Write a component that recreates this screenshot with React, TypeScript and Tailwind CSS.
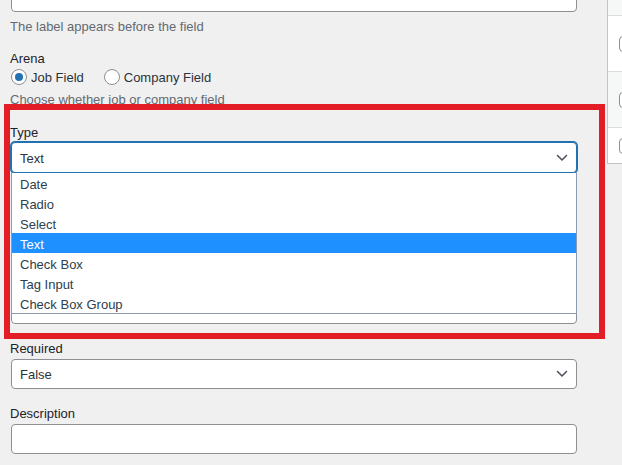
import React from "react";

const Chevron = () => (
  <svg width="12" height="8" viewBox="0 0 12 8" className="absolute right-[8px] top-1/2 -translate-y-1/2">
    <polyline points="1.5,1.5 6,6 10.5,1.5" fill="none" stroke="#50575e" strokeWidth="1.6" strokeLinecap="round" strokeLinejoin="round" />
  </svg>
);

const Radio = ({ checked }: { checked?: boolean }) => (
  <span className="w-[16px] h-[16px] rounded-full border border-[#8c8f94] bg-white flex items-center justify-center shrink-0">
    {checked && <span className="w-[8px] h-[8px] rounded-full bg-[#2271b1]" />}
  </span>
);

const items = ["Date", "Radio", "Select", "Text", "Check Box", "Tag Input", "Check Box Group"];

export default function App() {
  return (
    <div
      className="relative w-[622px] h-[465px] overflow-hidden bg-[#f0f0f1] flex text-[13px]"
      style={{ fontFamily: '"Liberation Sans", Arial, sans-serif' }}
    >
      {/* main column */}
      <div className="w-[607px] shrink-0 pl-[11px] flex flex-col">
        <div className="w-[566px] h-[30px] mt-[-18px] bg-white border border-[#8c8f94] rounded-[4px] shrink-0" />
        <div className="mt-[4px] h-[18px] leading-[22px] text-[#646970] -ml-[1px]">The label appears before the field</div>

        <div className="mt-[15px] h-[18px] leading-[20px] text-[#1d2327] -ml-[1px]">Arena</div>
        <div className="mt-[1px] h-[18px] flex items-center text-[#2c3338]">
          <Radio checked />
          <span className="ml-[4px] pt-[2px]">Job Field</span>
          <span className="ml-[20px] flex items-center">
            <Radio />
            <span className="ml-[4px] pt-[2px]">Company Field</span>
          </span>
        </div>
        <div className="mt-[4px] h-[18px] leading-[20px] text-[#646970] -ml-[1px]">Choose whether job or company field</div>

        <div className="mt-[15px] h-[18px] leading-[20px] text-[#1d2327] -ml-[1px]">Type</div>
        <div className="relative mt-[1px] w-[566px]">
          <div className="relative h-[31px] bg-white border border-[#2271b1] shadow-[0_0_0_1px_#2271b1] rounded-[4px] flex items-center pl-[8px] text-[#2c3338]">
            <span className="pt-[2px]">Text</span>
            <Chevron />
          </div>
          {/* hidden field beneath the open list */}
          <div className="mt-[121px] h-[30px] bg-white border border-[#8c8f94] rounded-[4px]" />
          {/* open dropdown list */}
          <div className="absolute left-0 top-[31px] w-[566px] bg-white border border-t-0 border-[#8a9bb2] flex flex-col">
            {items.map((it) => (
              <div
                key={it}
                className={
                  "h-[20px] leading-[23px] pl-[8px] " +
                  (it === "Text" ? "bg-[#1e90ff] text-white" : "text-[#2c3e50]")
                }
              >
                {it}
              </div>
            ))}
          </div>
        </div>

        <div className="mt-[15px] h-[18px] leading-[20px] text-[#1d2327] -ml-[1px]">Required</div>
        <div className="relative mt-[2px] w-[566px] h-[30px] bg-white border border-[#8c8f94] rounded-[4px] flex items-center pl-[8px] text-[#2c3338]">
          <span className="pt-[2px]">False</span>
          <Chevron />
        </div>

        <div className="mt-[15px] h-[18px] leading-[20px] text-[#1d2327] -ml-[1px]">Description</div>
        <div className="mt-[2px] w-[566px] h-[30px] bg-white border border-[#8c8f94] rounded-[4px]" />
      </div>

      {/* right table sliver */}
      <div className="flex-1">
        <div className="border-l border-b border-[#c3c4c7] flex flex-col">
          <div className="h-[16px] bg-[#f6f7f7] border-b border-[#dcdcde]" />
          <div className="h-[56px] bg-white flex items-center pl-[11px] border-b border-[#dcdcde]">
            <span className="w-[16px] h-[16px] shrink-0 rounded-[4px] border border-[#8c8f94] bg-white" />
          </div>
          <div className="h-[56px] bg-[#f6f7f7] flex items-center pl-[11px] border-b border-[#dcdcde]">
            <span className="w-[16px] h-[16px] shrink-0 rounded-[4px] border border-[#8c8f94] bg-white" />
          </div>
          <div className="h-[35px] bg-white flex items-center pl-[11px]">
            <span className="w-[16px] h-[16px] shrink-0 rounded-[4px] border border-[#8c8f94] bg-white" />
          </div>
        </div>
      </div>

      {/* red annotation box */}
      <div className="absolute left-[4px] top-[104px] w-[601px] h-[235px] border-[6px] border-[#e21d26] pointer-events-none" />
    </div>
  );
}
